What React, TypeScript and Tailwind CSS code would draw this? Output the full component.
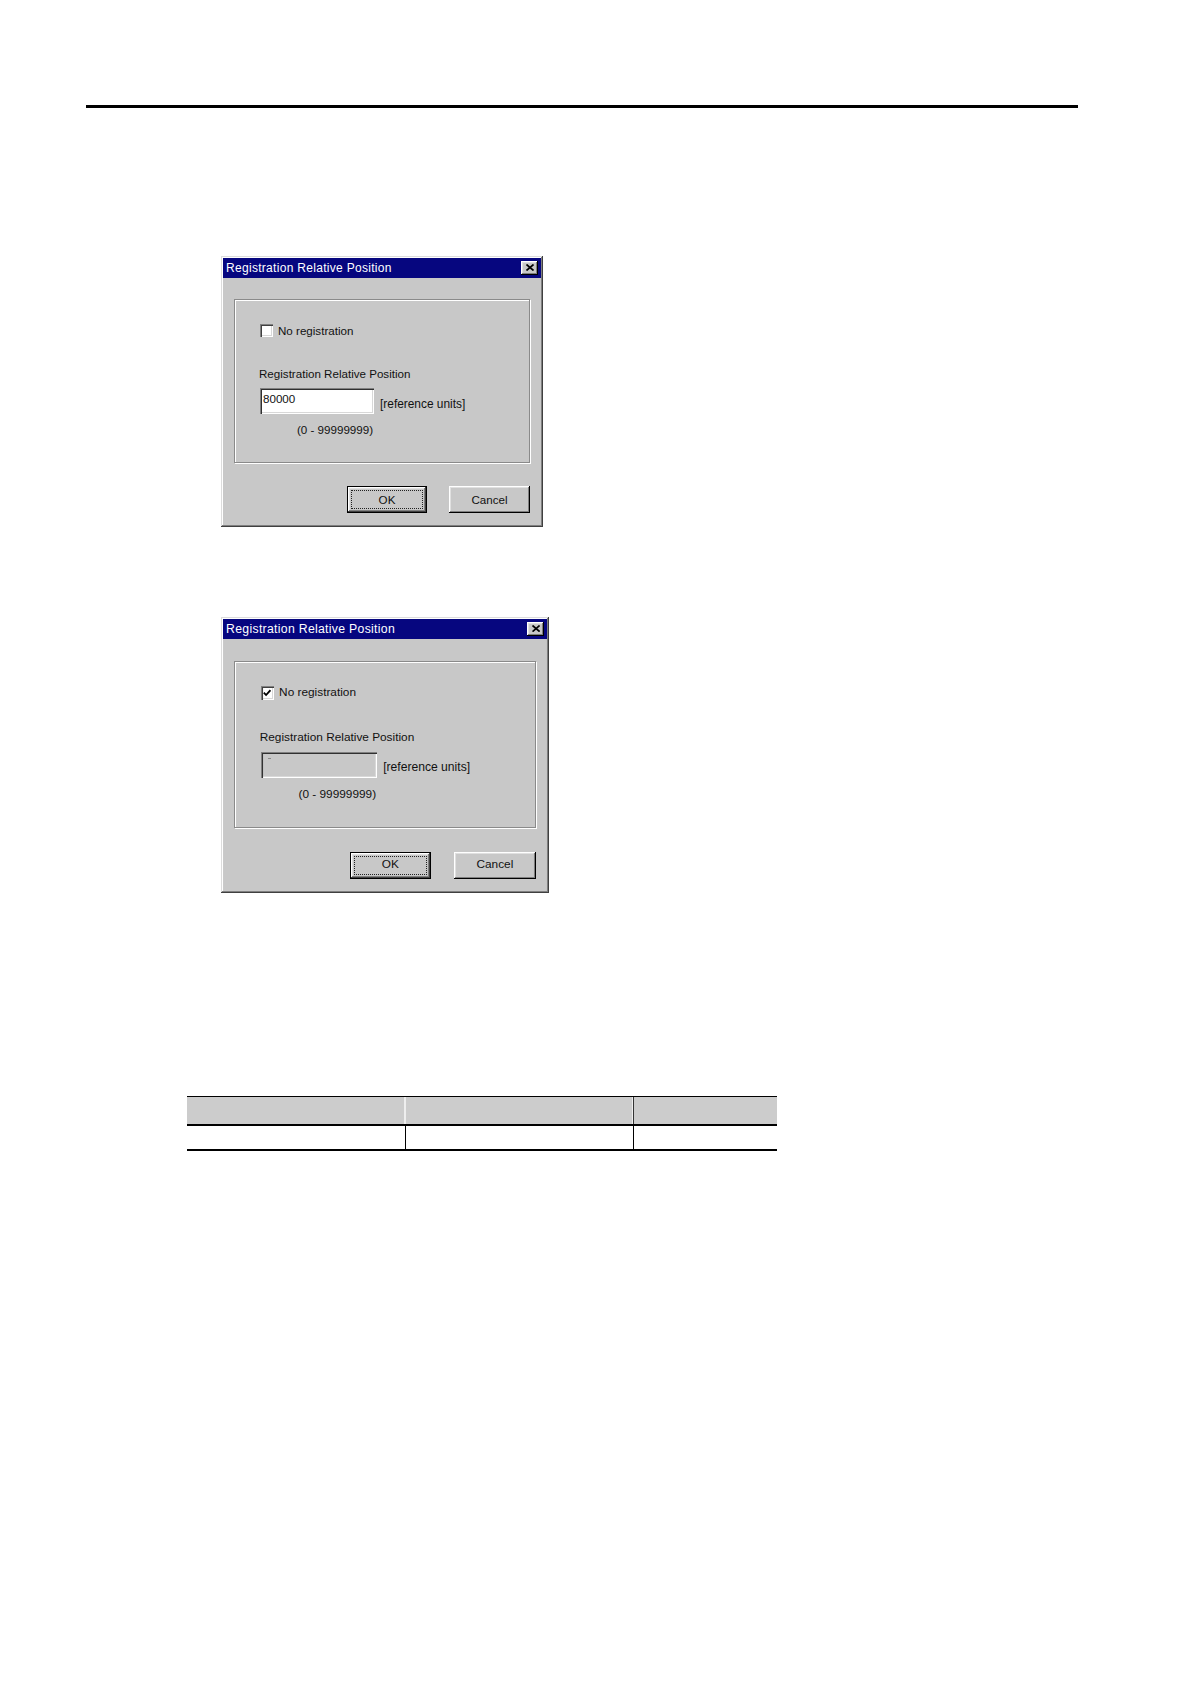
import React from "react";

const font = "font-['Liberation_Sans',Arial,Helvetica,sans-serif]";

function CloseBox() {
  return (
    <div className="w-[17px] h-[14px] bg-[#c8c8c8] flex items-center justify-center shadow-[inset_-1px_-1px_#000000,inset_1px_1px_#ffffff,inset_-2px_-2px_#808080,inset_2px_2px_#e0e0e0]">
      <svg width="8" height="7" viewBox="0 0 8 7" className="-mt-[1px]">
        <path d="M0.5 0.5 L7.5 6.5 M7.5 0.5 L0.5 6.5" stroke="#000" strokeWidth="1.7" fill="none" />
      </svg>
    </div>
  );
}

function Checkbox({ checked }: { checked: boolean }) {
  return (
    <div className="w-[13px] h-[13px] bg-white flex items-center justify-center shadow-[inset_1px_1px_#808080,inset_2px_2px_#404040,inset_-1px_-1px_#ffffff,inset_-2px_-2px_#d8d8d8]">
      {checked && (
        <svg width="8" height="8" viewBox="0 0 8 8">
          <path d="M0.8 3.6 L3 5.9 L7.3 1.2" stroke="#000" strokeWidth="1.8" fill="none" />
        </svg>
      )}
    </div>
  );
}

function Dialog({ checked }: { checked: boolean }) {
  return (
    <div
      className={`${font} w-[322px] h-[271px] bg-[#c8c8c8] p-[2px] flex flex-col text-[#111] shadow-[inset_-1px_-1px_#404040,inset_1px_1px_#dcdcdc,inset_-2px_-2px_#808080,inset_2px_2px_#ffffff]`}
    >
      <div className="h-[20px] bg-[#06067f] flex items-center justify-between pl-[3px] pr-[3px]">
        <span className="text-white text-[12px] tracking-[0.3px] leading-none">
          Registration Relative Position
        </span>
        <CloseBox />
      </div>
      <div className="flex-1 flex flex-col px-[11px] pt-[21px]">
        <div className="h-[164px] border border-[#8a8a8a] shadow-[1px_1px_0_#ffffff,inset_1px_1px_0_#ffffff] flex flex-col pl-[25px] pt-[24px] text-[11.6px]">
          <div className="flex items-center gap-[5px] h-[13px]">
            <Checkbox checked={checked} />
            <span className="leading-[13px]">No registration</span>
          </div>
          <div className="mt-[30px] -ml-[1px] leading-[14px]">Registration Relative Position</div>
          <div className="mt-[7px] flex items-center gap-[6px]">
            <div
              className={`w-[114px] h-[26px] pl-[3px] pt-[4px] leading-[14px] shadow-[inset_1px_1px_#808080,inset_2px_2px_#303030,inset_-1px_-1px_#ffffff,inset_-2px_-2px_#d8d8d8] ${
                checked ? "bg-[#c8c8c8]" : "bg-white"
              }`}
            >
              {checked ? (
                <span className="inline-block mt-[2px] ml-[4px] w-[3px] h-[1px] bg-[#8a8a8a] align-top" />
              ) : (
                "80000"
              )}
            </div>
            <span className="pt-[5px] leading-[14px] text-[11.9px]">[reference units]</span>
          </div>
          <div className="mt-[9px] ml-[37px] leading-[14px]">(0 - 99999999)</div>
        </div>
        <div className="mt-[23px] flex justify-end gap-[22px] text-[11.6px]">
          <div className="w-[80px] h-[27px] border border-black bg-[#c8c8c8] p-[3px] flex shadow-[inset_-1px_-1px_#404040,inset_1px_1px_#ffffff,inset_-2px_-2px_#808080,inset_2px_2px_#e0e0e0]">
            <div className="flex-1 border border-dotted border-[#222] flex items-center justify-center leading-none">
              OK
            </div>
          </div>
          <div className="w-[81px] h-[27px] bg-[#c8c8c8] flex items-center justify-center leading-none shadow-[inset_-1px_-1px_#000000,inset_1px_1px_#ffffff,inset_-2px_-2px_#808080,inset_2px_2px_#e0e0e0]">
            Cancel
          </div>
        </div>
      </div>
    </div>
  );
}

function Table() {
  return (
    <div className="ml-[187px] w-[590px] border-t border-black">
      <div className="grid grid-cols-[218px_228px_144px] h-[27px]">
        <div className="bg-[#cccccc] border-r border-[#eeeeee]" />
        <div className="bg-[#cccccc] border-l border-[#333] border-r border-[#eeeeee]" />
        <div className="bg-[#cccccc] border-l border-[#333]" />
      </div>
      <div className="grid grid-cols-[218px_228px_144px] h-[27px] border-t-2 border-b-2 border-black">
        <div />
        <div className="border-l border-black" />
        <div className="border-l border-black" />
      </div>
    </div>
  );
}

export default function App() {
  return (
    <div className="w-[1190px] min-h-[1684px] bg-white pt-[105px]">
      <div className="ml-[86px] w-[992px] h-[3px] bg-black" />
      <div className="mt-[148px] ml-[221px]">
        <Dialog checked={false} />
      </div>
      <div className="mt-[90px] ml-[221px]">
        <div className="[zoom:1.02] w-fit">
          <Dialog checked={true} />
        </div>
      </div>
      <div className="mt-[203px]">
        <Table />
      </div>
    </div>
  );
}
